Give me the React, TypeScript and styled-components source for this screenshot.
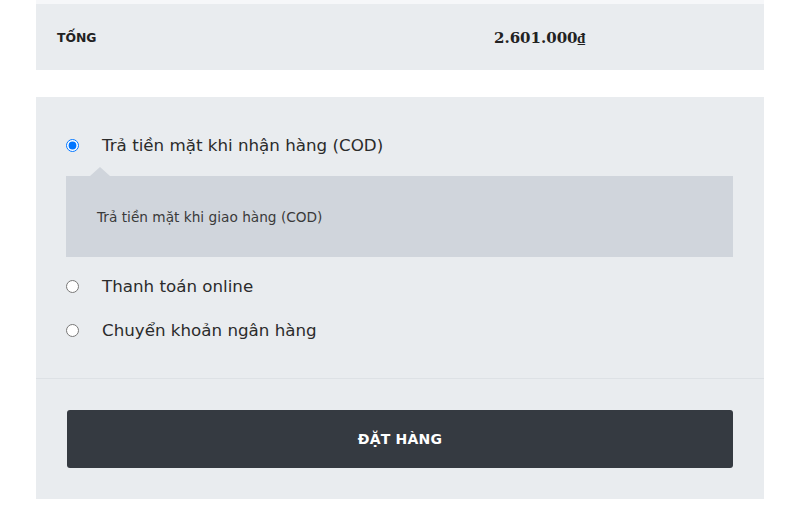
import React from "react";
import styled, { createGlobalStyle } from "styled-components";

const Global = createGlobalStyle`
  html, body { margin: 0; padding: 0; background: #ffffff; }
  body { font-family: "DejaVu Sans", Verdana, sans-serif; color: #333; }
  * { box-sizing: border-box; }
`;

const Page = styled.div`
  width: 728px;
  margin-left: 36px;
  display: flex;
  flex-direction: column;
`;

const TotalTable = styled.div`
  display: flex;
  flex-direction: column;
`;

const PrevRow = styled.div`
  height: 4px;
  background: #f6f7f9;
`;

const TotalRow = styled.div`
  display: grid;
  grid-template-columns: 437px 1fr;
  align-items: center;
  height: 66px;
  background: #e9ecef;
`;

const TotalLabel = styled.div`
  padding-left: 21px;
  font-family: "DejaVu Sans", Verdana, sans-serif;
  font-weight: bold;
  font-size: 12.4px;
  color: #222;
`;

const TotalValue = styled.div`
  padding-left: 21px;
  padding-top: 2px;
  font-family: "DejaVu Serif", Georgia, serif;
  font-weight: bold;
  font-size: 15px;
  color: #222;
`;

const PaymentBox = styled.div`
  margin-top: 27px;
  background: #e9ecef;
  display: flex;
  flex-direction: column;
`;

const Methods = styled.div`
  padding: 26px 31px 26px 30px;
  display: flex;
  flex-direction: column;
  border-bottom: 1px solid #dde1e5;
`;

const Method = styled.label`
  display: flex;
  align-items: center;
  height: 44px;
  gap: 23px;
  font-size: 16.7px;
  color: #2b2b2b;
`;

const Radio = styled.input`
  width: 13px;
  height: 13px;
  margin: 0;
  flex: none;
`;

const Description = styled.div<{ $gapBottom: number }>`
  position: relative;
  margin-top: 9px;
  margin-bottom: ${(p) => p.$gapBottom}px;
  height: 81px;
  background: #d0d5dc;
  display: flex;
  align-items: center;
  padding-left: 31px;
  font-size: 13.7px;
  color: #3a3a3a;

  &::before {
    content: "";
    position: absolute;
    left: 24px;
    top: -9px;
    border-left: 10px solid transparent;
    border-right: 10px solid transparent;
    border-bottom: 9px solid #d0d5dc;
  }
`;

const ButtonArea = styled.div`
  padding: 31px;
`;

const OrderButton = styled.button`
  width: 100%;
  height: 58px;
  border: none;
  border-radius: 3px;
  background: #353a41;
  color: #ffffff;
  font-family: "DejaVu Sans", Verdana, sans-serif;
  font-weight: bold;
  font-size: 14px;
  letter-spacing: 0.2px;
  cursor: pointer;
`;

export default function App() {
  return (
    <>
      <Global />
      <Page>
        <TotalTable>
          <PrevRow />
          <TotalRow>
            <TotalLabel>TỐNG</TotalLabel>
            <TotalValue>2.601.000₫</TotalValue>
          </TotalRow>
        </TotalTable>
        <PaymentBox>
          <Methods>
            <Method>
              <Radio type="radio" name="pay" defaultChecked />
              Trả tiền mặt khi nhận hàng (COD)
            </Method>
            <Description $gapBottom={7}>Trả tiền mặt khi giao hàng (COD)</Description>
            <Method>
              <Radio type="radio" name="pay" />
              Thanh toán online
            </Method>
            <Method>
              <Radio type="radio" name="pay" />
              Chuyển khoản ngân hàng
            </Method>
          </Methods>
          <ButtonArea>
            <OrderButton>ĐẶT HÀNG</OrderButton>
          </ButtonArea>
        </PaymentBox>
      </Page>
    </>
  );
}
